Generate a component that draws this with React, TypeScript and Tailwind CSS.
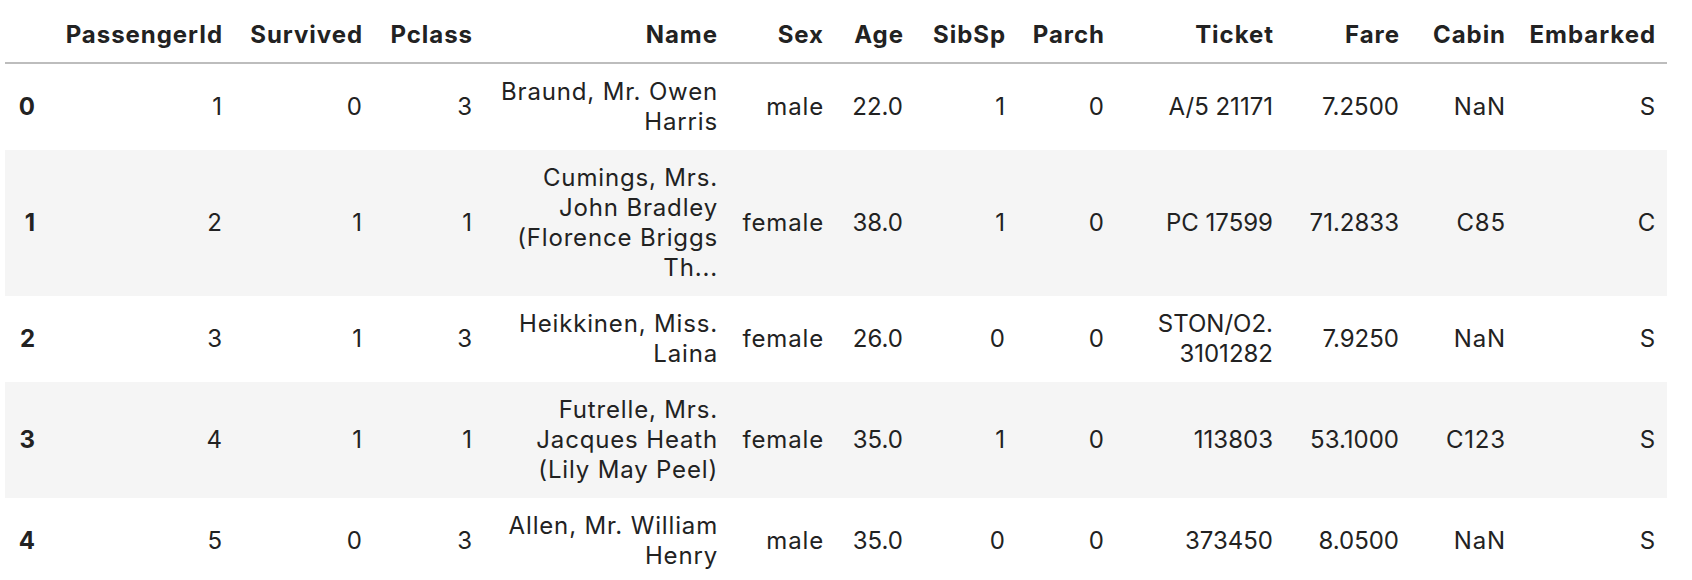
import React from 'react';

const columns = [
  { label: '', width: 'w-[42px]' },
  { label: 'PassengerId', width: 'w-[187px]' },
  { label: 'Survived', width: 'w-[140px]' },
  { label: 'Pclass', width: 'w-[110px]' },
  { label: 'Name', width: 'w-[245px]' },
  { label: 'Sex', width: 'w-[106px]' },
  { label: 'Age', width: 'w-[80px]' },
  { label: 'SibSp', width: 'w-[102px]' },
  { label: 'Parch', width: 'w-[99px]' },
  { label: 'Ticket', width: 'w-[169px]' },
  { label: 'Fare', width: 'w-[126px]' },
  { label: 'Cabin', width: 'w-[106px]' },
  { label: 'Embarked', width: 'w-[150px]' },
];

const textCols = [4, 5, 11, 12];

type Row = (string | string[])[];

const rows: Row[] = [
  ['0', '1', '0', '3', ['Braund, Mr. Owen', 'Harris'], 'male', '22.0', '1', '0', 'A/5 21171', '7.2500', 'NaN', 'S'],
  ['1', '2', '1', '1', ['Cumings, Mrs.', 'John Bradley', '(Florence Briggs', 'Th...'], 'female', '38.0', '1', '0', 'PC 17599', '71.2833', 'C85', 'C'],
  ['2', '3', '1', '3', ['Heikkinen, Miss.', 'Laina'], 'female', '26.0', '0', '0', ['STON/O2.', '3101282'], '7.9250', 'NaN', 'S'],
  ['3', '4', '1', '1', ['Futrelle, Mrs.', 'Jacques Heath', '(Lily May Peel)'], 'female', '35.0', '1', '0', '113803', '53.1000', 'C123', 'S'],
  ['4', '5', '0', '3', ['Allen, Mr. William', 'Henry'], 'male', '35.0', '0', '0', '373450', '8.0500', 'NaN', 'S'],
];

function Cell({ value }: { value: string | string[] }) {
  if (Array.isArray(value)) {
    return (
      <>
        {value.map((line, i) => (
          <div key={i} className="whitespace-nowrap">
            {line}
          </div>
        ))}
      </>
    );
  }
  return <span className="whitespace-nowrap">{value}</span>;
}

export default function App() {
  return (
    <div className="bg-white pl-[5px] text-[#222] text-[24px] leading-[30px]" style={{ fontFamily: 'Inter, "Noto Sans", sans-serif' }}>
      <table className="table-fixed border-collapse">
        <colgroup>
          {columns.map((c, i) => (
            <col key={i} className={c.width} />
          ))}
        </colgroup>
        <thead>
          <tr>
            {columns.map((c, i) => (
              <th key={i} className="text-right font-bold tracking-[0.04em] pl-3 pr-[11px] pt-[20px] pb-[12px] border-b-2 border-[#bdbdbd] align-bottom whitespace-nowrap">
                {c.label}
              </th>
            ))}
          </tr>
        </thead>
        <tbody>
          {rows.map((row, r) => (
            <tr key={r} className={r % 2 === 1 ? 'bg-[#f5f5f5]' : 'bg-white'}>
              {row.map((v, i) =>
                i === 0 ? (
                  <th key={i} className="text-right font-bold px-3 py-[13px] align-middle">
                    {v as string}
                  </th>
                ) : (
                  <td
                    key={i}
                    className={
                      textCols.includes(i)
                        ? 'text-right tracking-[0.035em] pl-3 pr-[11px] py-[13px] align-middle'
                        : 'text-right px-3 py-[13px] align-middle'
                    }
                  >
                    <Cell value={v} />
                  </td>
                )
              )}
            </tr>
          ))}
        </tbody>
      </table>
    </div>
  );
}
